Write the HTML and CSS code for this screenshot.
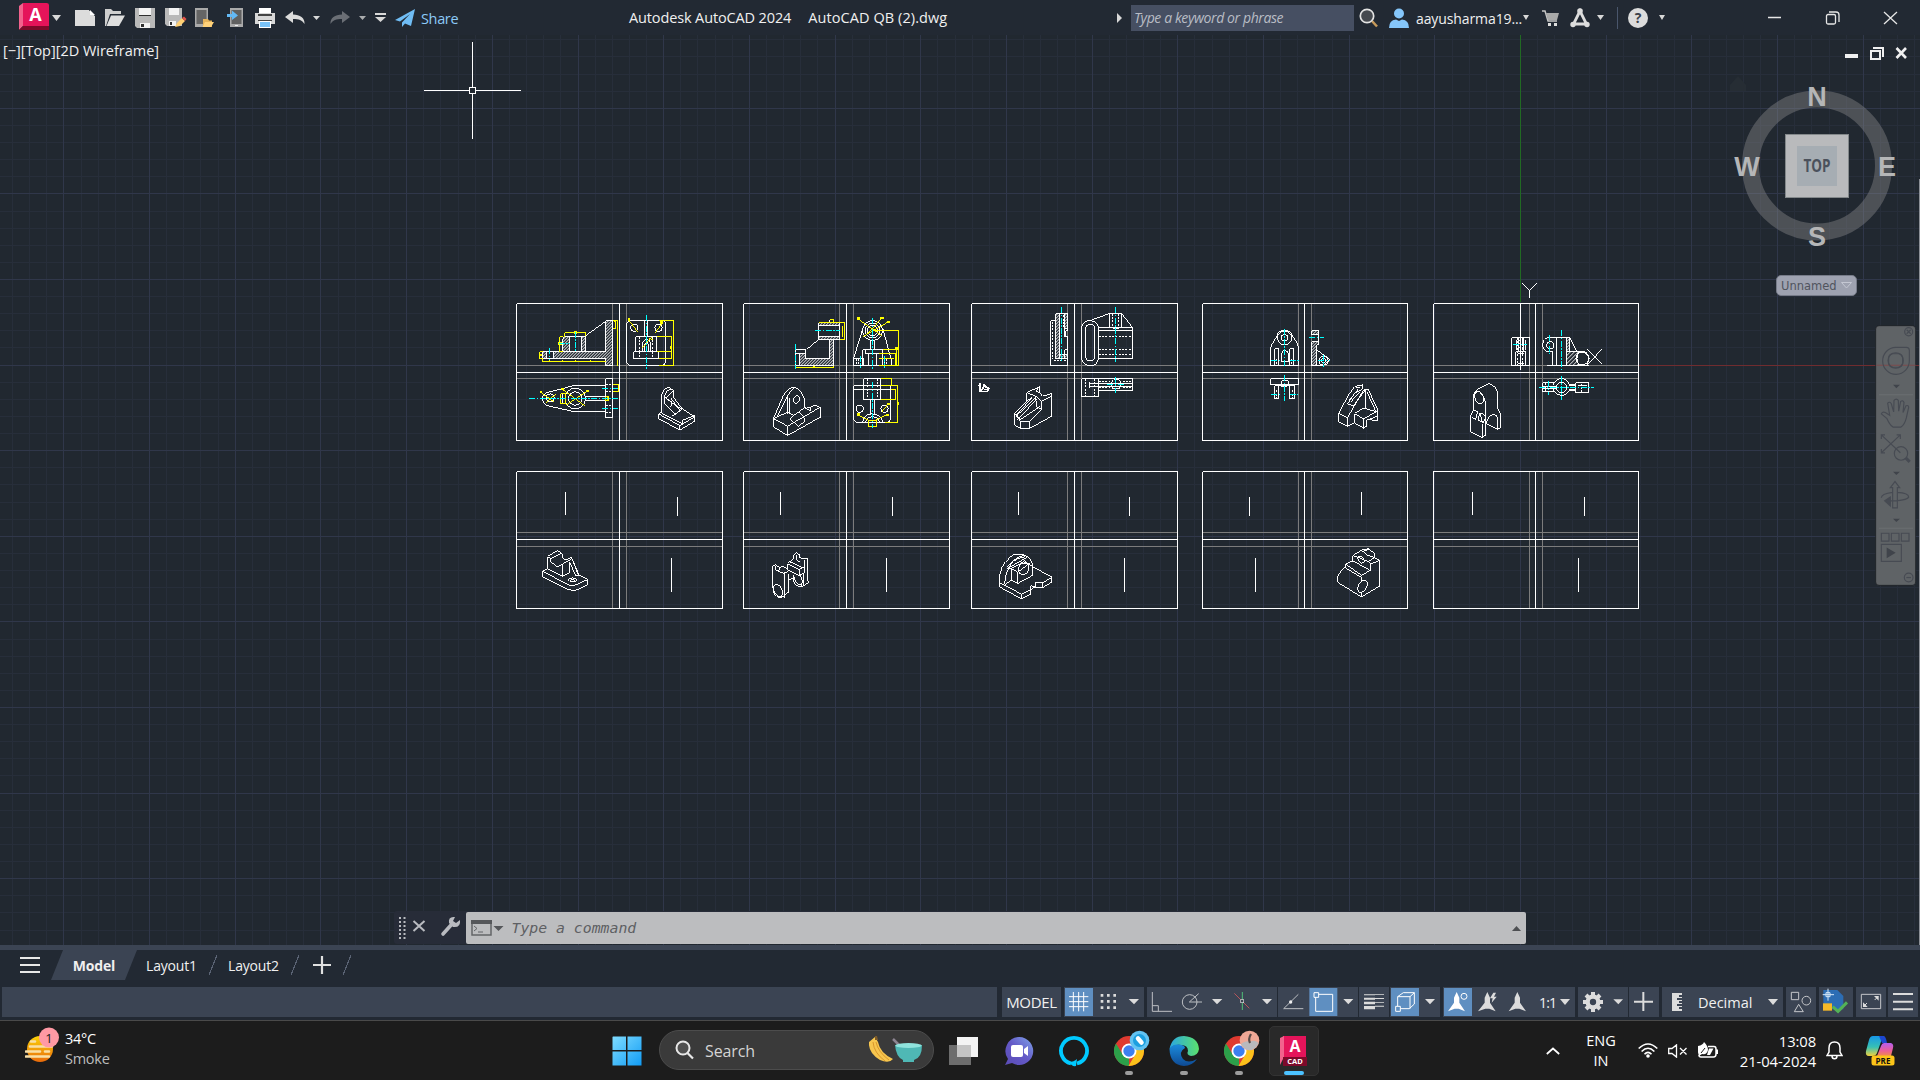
FILE: index.html
```html
<!DOCTYPE html>
<html lang="en">
<head>
<meta charset="utf-8">
<title>Autodesk AutoCAD 2024 - AutoCAD QB (2).dwg</title>
<link rel="stylesheet" href="styles.css">
</head>
<body>
<header class="titlebar">
  <div class="quick">
    <svg class="logo" width="30" height="28" viewBox="0 0 30 28"><path fill="#e5145a" d="M4 0H27.500Q30 0 30 2V23H4z"/><path fill="#f2628d" d="M0 3L4 0V23L0 27z"/><path fill="#7d0a2a" d="M0 27L4 23H30V27H0z"/><text x="16.500" y="17.500" class="logo-a">A</text></svg>
    <svg class="caret c1" width="9" height="6" viewBox="0 0 9 6"><path d="M0 0H9L4.500 6z"/></svg>
    <svg class="ic" width="30" height="24" viewBox="0 0 30 24"><path fill="#dcdcdc" d="M5 4H19L25 10V20H5z"/><path fill="#222933" d="M19 4H25V10z"/><path fill="#fff" d="M20 4L25 9H20z"/></svg>
    <svg class="ic" width="30" height="24" viewBox="0 0 30 24"><path fill="#cfcfcf" d="M5 3H11L13 5H21V8H10L6 20H5z"/><path fill="#dedede" d="M11 9.500H25L19 20H6.500z"/></svg>
    <svg class="ic" width="30" height="24" viewBox="0 0 30 24"><path fill="#b9b9b9" d="M5 2H25V22H7L5 20z"/><path fill="#f3f3f3" d="M9 2H21V9H9zM10 17H20V22H10z"/><path fill="#303030" d="M9 9H21V10H9zM11 18H14V21H11z"/></svg>
    <svg class="ic" width="30" height="24" viewBox="0 0 30 24"><path fill="#b9b9b9" d="M5 2H22V20H7L5 18z"/><path fill="#f3f3f3" d="M9 2H19V9H9zM9 15H16V20H9z"/><path fill="#303030" d="M10 16H12V19H10z"/><path fill="#ffcf73" d="M15 21L17 17L22 12L25 15L20 20z"/><path fill="#e0524a" d="M22 12L24 10.500L26.500 13L25 15z"/></svg>
    <svg class="ic" width="30" height="24" viewBox="0 0 30 24"><path fill="#aaa" d="M5 2H18V21H5z"/><path fill="#656565" d="M6.500 4H16.500V18H6.500z"/><path fill="#e6b45b" d="M13 13H18L19 14.500H22V21H13z"/><path fill="#ffd27a" d="M15 16H24L21 21H12.500z"/></svg>
    <svg class="ic" width="30" height="24" viewBox="0 0 30 24"><path fill="#aaa" d="M10 2H23V21H10z"/><path fill="#606060" d="M11.500 4H21.500V18H11.500z"/><path fill="#63b9f5" d="M7 8H12V4.500L18 9.500L12 14V11H7z"/><path fill="#eee" d="M15 19H18V20H15z"/></svg>
    <svg class="ic" width="30" height="24" viewBox="0 0 30 24"><path fill="#fff" d="M9 2H21V8H9z"/><path fill="#d7d7d7" d="M5 7H25V18H5z"/><path fill="#444" d="M8 8H22V10H8zM8 14H22V15H8z"/><path fill="#fff" d="M9 15H21V22H9z"/><path fill="#78c2f8" d="M10 16H20V21H10z"/></svg>
    <svg class="ic" width="30" height="24" viewBox="0 0 30 24"><path fill="#dcdcdc" d="M5 11L13 5V8.500C20 8.500 25 12 24.500 18C22 14 19 13 13 13V17z"/></svg>
    <svg class="caret c2" width="7" height="4" viewBox="0 0 7 4"><path d="M0 0H7L3.500 4z"/></svg>
    <svg class="ic c3" width="30" height="24" viewBox="0 0 30 24"><path fill="#6a6e75" d="M25 11L17 5V8.500C10 8.500 5 12 5.500 18C8 14 11 13 17 13V17z"/></svg>
    <svg class="caret c4" width="7" height="4" viewBox="0 0 7 4"><path d="M0 0H7L3.500 4z"/></svg>
    <svg class="caret c5" width="11" height="9" viewBox="0 0 11 9"><path d="M0 0H11V2H0zM0 4H11L5.500 9z"/></svg>
    <svg class="plane" width="20" height="18" viewBox="0 0 20 18"><path fill="#70bdf5" d="M20 0L0 11L5 12.500L15 5L7 13.500V18L10 14.500L16 17z"/></svg>
    <span class="share">Share</span>
  </div>
  <div class="doc-title"><span>Autodesk AutoCAD 2024</span><span class="file">AutoCAD QB (2).dwg</span></div>
  <div class="account">
    <svg class="caret" width="5" height="10" viewBox="0 0 5 10"><path d="M0 0L5 5L0 10z"/></svg>
    <div class="search">Type a keyword or phrase</div>
    <svg class="a1" width="20" height="20" viewBox="0 0 20 20"><path stroke="#c79a5b" stroke-width="2.500" d="M13 13L18 18.500"/><circle cx="8" cy="8" r="6.700" fill="#45494f" stroke="#e3e3e3" stroke-width="1.700"/></svg>
    <svg class="a2" width="20" height="20" viewBox="0 0 20 20"><circle cx="10" cy="5.500" r="5" fill="#85c6fa"/><path fill="#85c6fa" d="M0 20Q0 12 7 11.500L10 13L13 11.500Q20 12 20 20z"/></svg>
    <span class="user">aayusharma19...</span>
    <svg class="caret a3" width="6" height="5" viewBox="0 0 6 5"><path d="M0 0H6L3 5z"/></svg>
    <svg class="a4" width="18" height="18" viewBox="0 0 18 18"><path fill="none" stroke="#c6c6c6" stroke-width="1.500" d="M0 2H3L6 12H15"/><path fill="#a9a9a9" d="M4 4H17L15 11H6z"/><path fill="#ddd" d="M6 14H9V17H6zM12 14H15V17H12z"/></svg>
    <svg class="a5" width="20" height="20" viewBox="0 0 20 20"><path fill="none" stroke="#ddd" stroke-width="2.800" d="M10 3L3.500 16H16.500z"/><circle cx="10" cy="3" r="2.800" fill="#ddd"/><circle cx="3" cy="16.500" r="2.700" fill="#ddd"/><circle cx="17" cy="16.500" r="2.700" fill="#ddd"/></svg>
    <svg class="caret a6" width="7" height="5" viewBox="0 0 7 5"><path d="M0 0H7L3.500 5z"/></svg>
    <i class="vsep"></i>
    <span class="help">?</span>
    <svg class="caret a7" width="6" height="5" viewBox="0 0 6 5"><path d="M0 0H6L3 5z"/></svg>
    <svg class="win" width="130" height="14" viewBox="0 0 130 14" fill="none" stroke="#e6e6e6" stroke-width="1.300"><path d="M0 6.500H13M116 1L129 13M129 1L116 13"/><rect x="58.500" y="3.500" width="9" height="9.500" rx="1.500"/><path d="M61 1H68Q71 1 71 4V11"/></svg>
  </div>
</header>

<main class="canvas">
  <svg class="drawing" width="1920" height="910" viewBox="0 35 1920 910">
    <defs>
      <pattern id="hatch" width="9" height="9" patternUnits="userSpaceOnUse"><path d="M0 0H3V3H0zM3 6H6V9H3zM6 3H9V6H6z" fill="#fff"/></pattern>
      <pattern id="hatch2" width="12" height="12" patternUnits="userSpaceOnUse"><path d="M0 12L12 0" stroke="#fff" stroke-width="3"/></pattern>
    </defs>
    <path id="grid-minor" class="minor"/>
    <path id="grid-major" class="major"/>
    <path class="axis-y" d="M1520.500 35V302"/>
    <path class="axis-x" d="M1639 365.500H1920"/>

    <!-- sheets 1 and 2, upper row -->
    <g transform="translate(500.200 290.200) scale(.33333)">
      <g class="g"><path d="M337 40V451M379 40V451M49 226H668M49 265H668M1018 40V451M1060 40V451M730 226H1349M730 265H1349"/></g>
      <g class="w">
        <path d="M49 40H668V451H49zM358 40V451M49 247H668M730 40H1349V451H730zM1039 40V451M730 247H1349"/>
        <path fill="url(#hatch)" d="M316 91H337V226H316V205H127V184H316z"/>
        <path fill="url(#hatch)" d="M187 148L193 139H207V184H187zM244 139H257V184H244z"/>
        <path d="M193 139H257M257 136L316 94"/><path fill="#212830" d="M139 184H160V205H139z"/>
        <path d="M379 103Q379 91 391 91H487Q496 91 496 103V214Q493 226 484 226H391Q379 223 379 214zM433 91V139M442 91V139M406 184V139H469V184M400 184H475V205H400zM427 184V160Q427 148 439 148Q451 148 451 160V184M433 184V163Q439 150 445 163V184"/>
        <circle cx="402" cy="113" r="11"/><circle cx="475" cy="113" r="11"/>
        <path class="d" d="M418 139V184M457 139V184M418 184V205M457 184V205"/>
        <path d="M316 265H337V382H316zM316 286H222L136 308Q126 318 127 325Q127 340 140 346L220 364H316M256 319H316M256 331H316M187 310H196V340H187z"/>
        <circle cx="225" cy="325" r="31"/><circle cx="225" cy="325" r="20"/><circle cx="150" cy="323" r="12"/>
        <path class="d" d="M316 283H337M316 304H337M316 346H337M316 367H337"/>
        <path d="M485 366V312Q490 295 506 292L520 300V321L545 355L583 380V393L539 420L475 385V371L485 366M475 371L539 406L583 380M539 406V420M494 342V315Q498 300 512 296M500 322L520 302M494 320L518 340L545 358L515 378M494 342L526 374M512 324L540 362M485 370L548 402V390L583 376M503 330L515 334L512 350"/>
        <!-- second sheet views -->
        <path fill="url(#hatch)" d="M955 97H1018V106H955zM955 139H1018V148H955z"/><path d="M955 97V148M1018 97V148M955 148L919 178M989 88V97M1000 88V97"/>
        <path fill="url(#hatch)" d="M898 205V190H916V205H989V148H1000V226H898z"/><path d="M886 178H916V190H886zM886 190V226H898"/>
        <circle cx="1117" cy="121" r="30"/><circle cx="1117" cy="121" r="22"/><circle cx="1117" cy="121" r="15"/>
        <path d="M1060 226V205H1090V226zM1060 205L1089 112M1147 112L1172 205M1087 178H1147V226H1087zM1096 190H1138M1096 178V190M1105 190V226M1129 190V226M1112 148V178M1123 148V178M1147 205H1175V226H1060"/>
        <path class="d" d="M1069 205V226M1075 205V226M1153 205V226M1160 205V226"/>
        <path d="M1090 265H1141V328H1090zM1060 286H1172V385Q1170 397 1158 397H1076Q1060 397 1060 382zM1060 298H1172M1112 328V370M1123 328V370M1087 397Q1090 371 1117 371Q1145 373 1147 397M1096 397Q1098 380 1117 380Q1136 380 1138 397"/>
        <path class="d" d="M1102 265V328M1132 265V328"/><circle cx="1079" cy="356" r="11"/><circle cx="1153" cy="356" r="11"/>
        <path d="M820 385L862 408L962 350V380L862 436L820 410zM862 408V436M820 385L850 315Q865 290 882 292Q900 295 908 315L914 330V350M832 378L862 318V370M862 318Q870 300 882 292M868 370V322M820 385L862 366L880 376L914 352L930 362M880 376L868 386L895 408L912 395Q915 375 895 366M930 352Q945 340 958 352L962 360M914 355L930 350V362"/><ellipse cx="889" cy="328" rx="9" ry="12" transform="rotate(25 889 328)"/>
      </g>
      <g class="y">
        <path d="M193 139V127H257V136M187 139H178V184H187M118 184H127M118 184V205H127V214H316M148 208V216M187 208V216M226 208V216M270 208V216M337 91H352V226M337 115H346V94H340M475 91H520V226H475M469 139H514V205H475M469 184H514M382 85L412 124M487 97L466 127M427 172L456 139M445 142L457 148M337 283H355V304H337M118 304L160 334M168 311L136 338M186 297L253 346M265 300L196 346M181 310H196V340H181zM316 319H325V331H316z"/>
        <path d="M955 97H1033V148H1018M1027 106V139M989 88H1000V97M886 226V232H1000V226M1072 85L1144 136M1147 82L1096 137M1166 94L1087 140M1120 121H1195V226H1135M1147 178H1190V226M1135 190H1186V226M1135 205H1180M1141 265H1174V286H1141M1172 298H1186V328H1141M1172 286H1192V397H1153M1165 340L1144 366M1072 373L1110 392M1160 373L1123 392M1105 391V409H1130V391z"/>
        <path class="yt" d="M118 194H124M174 160H186M220 127H230M349 155H354M517 160H522M510 172H516M938 230H944M1184 175H1194M1189 340H1195M1070 85H1078M1140 84H1151M1160 95H1168M1070 373H1078M1158 374H1166M1160 342H1168M258 302H266M183 297H191M118 305H126M382 88H390M480 97H488M320 325H326"/>
      </g>
      <g class="c"><path d="M148 174V210M226 124V184M175 160H210M439 75V235M87 325H355M306 295H352M306 355H352M945 121H1018M886 162V236M1117 84V236M1081 196V234M1153 196V234M1117 276V414"/></g>
    </g>

    <!-- sheets 3 and 4, upper row -->
    <g transform="translate(960.200 290.200) scale(.33333)">
      <g class="g"><path d="M322 40V451M364 40V451M34 226H653M34 265H653M1015 40V451M1054 40V451M727 226H1343M727 265H1343"/></g>
      <g class="w">
        <path d="M34 40H653V451H34zM343 40V451M34 247H653M727 40H1343V451H727zM1033 40V451M727 247H1343"/>
        <path d="M286 70H322V121H316V139M322 140V206M286 91H271V226H322V206M313 115V139H322M313 206V178H322"/>
        <path fill="url(#hatch)" d="M286 70H298V206H286zM313 70H322V115H313zM298 193H322V206H298z"/>
        <path class="d" d="M277 94V206M280 211H322M298 100V200M310 75V112"/>
        <path d="M364 112Q368 91 390 91Q412 93 415 112V205Q412 226 390 226Q368 226 364 205zM376 115Q378 102 390 102Q402 102 404 115V200Q402 212 390 212Q378 212 376 200zM390 91L448 70H484L517 112V205H415M415 112H517M415 121H517M448 70V112M484 70V112M457 115H475"/>
        <path class="d" d="M415 139H517M415 178H517M415 193H517M457 70V112M475 70V112"/>
        <path d="M364 265H415V319H364zM415 265H517V301H415M388 280H517M388 289H517M388 274V292M451 280L460 268H475L484 280L478 295H457z"/>
        <path class="d" d="M376 265V319M404 265V319M415 274H448M487 274H517M415 292H448M487 292H517"/>
        <path class="thick" d="M60 278V304H82L86 294L76 290L70 282M55 288L62 282M60 304L68 296L72 286M70 298H80"/>
        <path d="M163 370V404L181 415H208V394H181L163 370L199 333V307L238 290V307L247 318L274 310V378L208 415M199 307L226 318L244 333L274 318M226 318V322L172 374M244 333V358L208 394M181 394V415M172 388L232 325M181 388L238 350M199 333L216 322M216 322L166 378M232 292L229 304L238 307M166 370L181 390M226 322L230 350L244 358"/>
        <path d="M931 226V175Q932 165 951 137Q953 121 973 121Q994 121 996 137Q1015 160 1015 175V226zM943 226V175H955V226M988 226V175H1000V226M964 214V190Q966 181 973 181Q982 181 984 190V214z"/>
        <circle cx="973" cy="143" r="21"/><circle cx="973" cy="143" r="10"/><path class="d" d="M949 205V226M994 205V226"/>
        <path fill="url(#hatch)" d="M1054 121H1075V133H1054zM1054 154H1075V163H1069V226H1054z"/><path d="M1075 133V154M1069 178L1108 208L1090 226H1069"/><circle cx="1090" cy="211" r="14"/><circle cx="1090" cy="211" r="7"/>
        <path d="M931 265H1015V283H931zM943 286H955V325H943zM988 286H1003V325H988zM955 286Q973 292 988 286M964 271H984V286H964z"/>
        <path class="d" d="M949 300V325M996 300V325"/>
        <path d="M1135 370V394L1162 408L1183 398V370L1210 354L1252 365V392L1228 388M1135 370L1162 382V408M1135 370L1165 315L1183 289L1207 284V296L1183 310L1162 342L1180 346L1216 298M1162 382L1198 320L1210 300Q1225 290 1228 306L1252 358V392M1216 298V354M1220 304L1246 362M1183 370L1210 386V414L1183 398M1210 386L1246 366M1210 414L1219 408V390L1252 378M1165 333L1195 296M1171 336L1198 306M1183 289L1198 293"/>
      </g>
      <g class="c"><path d="M304 51V212M466 51V216M441 283H490M466 261V309M973 115V230M933 211H958M988 211H1015M1047 142H1090M1074 211H1110M1090 194V230M973 255V333M933 313H958M988 313H1012"/></g>
    </g>

    <!-- sheet 5, upper row -->
    <g transform="translate(1400.200 270.200) scale(.33333)">
      <g class="g"><path d="M388 100V511M427 100V511M100 286H716M100 325H716"/></g>
      <g class="w">
        <path d="M100 100H716V511H100zM406 100V511M100 307H716M361 97V300"/>
        <path d="M334 202H388V286H334zM346 244H376V286H346zM346 244V286M355 202V244M369 202V244M349 208V240M376 208V240M352 250H370M352 280H370"/>
        <path class="d" d="M352 202V286M366 202V286M355 210H370M355 220H370M355 232H370"/>
        <path d="M457 286V244H440Q427 238 427 222Q430 204 445 202H508V244M469 202V286M499 202V286M508 202L530 244M440 286H565M499 244H548Q566 246 567 265L560 286"/><circle cx="450" cy="225" r="11"/>
        <path fill="url(#hatch)" d="M499 202H508V244H499z"/><path fill="url(#hatch2)" d="M499 244H535Q524 265 538 286H499z"/><circle cx="546" cy="265" r="19"/>
        <path d="M562 237L606 282M606 237L562 282M366 39L388 61L410 39M388 61V84"/>
        <path d="M427 337H463Q468 325 484 325Q502 326 506 342H526V337H566V367H526V361H506Q500 376 484 376Q468 375 463 364H427zM427 349H466M427 355H466M506 346H526V358H506M532 346H560"/><circle cx="484" cy="352" r="16"/>
        <path class="d" d="M436 337V364M460 337V364M545 340V367"/>
        <path d="M211 485V436L220 418V370L236 355L267 340L284 350L292 364V415L301 430V472L292 478L259 460Q262 436 280 433Q292 434 292 445V478M211 485L247 502L256 495V436M247 502V460M256 436L257 400L250 380L236 362L220 370M220 418L232 424L226 448L214 440M235 428L250 432L256 440M238 430L234 450L250 458L254 446M240 432L246 456"/><ellipse cx="237" cy="382" rx="13" ry="19" transform="rotate(-20 237 382)"/>
      </g>
      <g class="c"><path d="M339 223H381M448 195V252M484 180V300M417 352H582M484 316V388M445 333V375"/></g>
    </g>

    <!-- lower row -->
    <g transform="translate(500.200 460.200) scale(.33333)">
      <g class="g"><path d="M337 34V445M379 34V445M49 217H668M49 259H668M1018 34V445M1060 34V445M730 217H1349M730 259H1349"/></g>
      <g class="w">
        <path d="M49 34H668V445H49zM358 34V445M49 238H668M730 34H1349V445H730zM1039 34V445M730 238H1349M196 96V165M532 111V168M514 294V396M841 96V165M1177 111V168M1159 294V396"/>
        <path d="M127 333V350L205 388Q220 394 232 388L262 374V358L236 344M127 333L142 325V289L172 271L186 280V290L193 300L214 292L236 344L226 348M127 333L205 374Q220 380 232 372L262 358M142 289L152 295L181 280M152 295V305L172 320L214 296M142 325L187 348V312M187 348L208 338V304M208 304L226 346M217 300L234 343"/><ellipse cx="217" cy="359" rx="12" ry="6"/><path d="M212 359H222V363H212z"/>
        <path d="M817 380V318L826 314L838 322L850 318L862 328V310L880 296V285L889 278L898 284V292L910 296L922 296V360L926 366L905 380Q885 380 880 362V350M817 380Q822 405 844 412L865 396V360L880 352M853 412V336M862 328L898 346L912 338V300M862 310L898 328L912 320M826 318V330L853 340L862 335M838 322L835 334M868 304L905 322M889 285V300L898 304M865 340V360M898 346V330"/><ellipse cx="833" cy="392" rx="13" ry="20" transform="rotate(-20 833 392)"/><path d="M880 345Q885 375 905 375Q910 360 900 345M910 340V375"/>
      </g>
    </g>
    <g transform="translate(960.200 460.200) scale(.33333)">
      <g class="g"><path d="M322 34V445M364 34V445M34 217H653M34 259H653M1015 34V445M1054 34V445M727 217H1343M727 259H1343"/></g>
      <g class="w">
        <path d="M34 34H653V445H34zM343 34V445M34 238H653M727 34H1343V445H727zM1033 34V445M727 238H1343M175 96V165M508 111V168M493 294V396M868 111V168M1204 96V165M886 294V396"/>
        <path d="M118 367V380L184 416L211 402V388L226 380V366L247 368L274 352V366L247 383H232L211 376V388M118 367L184 402L211 388M184 402V416M118 367V345Q130 295 160 284Q195 278 210 296L218 315V345L172 370L154 360V325L140 325L172 308L202 290M133 374L154 360M133 370Q135 340 150 315Q170 290 195 290M142 320Q160 295 190 285M154 325L172 336V370M172 336L208 310M190 300L218 320L274 350M154 325L190 305L205 310M247 368V383"/><ellipse cx="190" cy="326" rx="15" ry="18" transform="rotate(25 190 326)"/>
        <path d="M1132 362V350Q1140 330 1156 320V312L1178 302V286L1204 270L1225 265L1243 280V292L1258 300V378L1204 410L1138 370zM1156 312L1204 345L1232 330V312L1258 300M1178 302L1232 332M1154 322L1204 352V364M1204 395V408M1178 286L1195 292M1204 270L1222 285L1243 292L1225 304M1195 290L1212 300L1225 304L1232 312M1210 272L1225 268"/><ellipse cx="1207" cy="378" rx="12" ry="20" transform="rotate(28 1207 378)"/><ellipse cx="1203" cy="298" rx="8" ry="12" transform="rotate(-35 1203 298)"/>
      </g>
    </g>
    <g class="g g1"><path d="M1529.500 471V608M1542.500 471V608M1433 532.500H1638M1433 546.500H1638"/></g>
    <g class="w w1"><path d="M1433.500 471.500H1638.500V608.500H1433.500zM1535.500 471V608M1433 539.500H1638M1472.500 492V515M1584.500 497V516M1578.500 558V592"/>
      <path d="M424 90.500H521M472.500 42V139"/><rect x="469.500" y="87.500" width="6" height="6" class="pick"/></g>
  </svg>

  <div class="view-label">[−][Top][2D Wireframe]</div>

  <svg class="mdi" width="64" height="15" viewBox="0 0 64 15"><path fill="#f0f0f0" d="M0 8H13V12H0z"/><path fill="none" stroke="#f0f0f0" stroke-width="2" d="M26 5H35V13H26zM28 2H38V11"/><path stroke="#f0f0f0" stroke-width="2.600" d="M51.500 2L61 12M61 2L51.500 12"/></svg>

  <svg class="viewcube" width="170" height="180" viewBox="1732 76 170 180">
    <path fill="#262d34" d="M1730 85L1738 76L1746 85V91H1730z"/>
    <circle cx="1817" cy="165.500" r="66.500" fill="none" stroke="#8b8b8d" stroke-opacity=".42" stroke-width="17"/>
    <rect x="1785.500" y="134.500" width="63" height="63" fill="#b9babc" stroke="#83888a"/>
    <rect x="1797" y="146" width="40" height="40" fill="#a6adb3"/>
    <text class="top" x="1817" y="172" textLength="27" lengthAdjust="spacingAndGlyphs">TOP</text>
    <g class="dir"><text x="1817" y="106">N</text><text x="1817" y="246">S</text><text x="1747" y="176">W</text><text x="1887" y="176">E</text></g>
  </svg>

  <div class="ucs"><span>Unnamed</span><svg width="11" height="7" viewBox="0 0 11 7"><path d="M.5.500H10.500L5.500 6z" fill="none" stroke="#c4c7d2"/></svg></div>

  <svg class="navbar" width="41" height="261" viewBox="526 755 123 772" preserveAspectRatio="none">
    <rect x="528" y="757" width="120" height="768" rx="10" fill="#5f6366" stroke="#16191e" stroke-width="2"/>
    <path d="M530 874H648" stroke="#7b4a4c" stroke-width="3"/>
    <g fill="none" stroke="#474b53" stroke-width="3.500">
      <circle cx="627" cy="775" r="12"/><path d="M621 769L633 781M633 769L621 781"/>
      <path d="M588 821H620Q629 821 629 830V860A40 40 0 1 1 588 821z"/><circle cx="588" cy="860" r="23"/><rect x="567" y="840" width="42" height="40" rx="13"/>
      <path d="M580 1057Q570 1050 562 1032L545 1018Q548 1010 557 1014L570 1022L564 986Q570 980 575 988L582 1012L583 978Q590 970 596 978L597 1010L603 981Q610 976 613 984L610 1014L619 994Q627 991 627 999L620 1030Q615 1050 604 1057z"/>
      <path d="M545 1080L602 1133M602 1080L545 1133M545 1092V1080H556M591 1080H602V1092M545 1122V1133H556"/><circle cx="604" cy="1135" r="20"/><path stroke-width="9" d="M618 1148L630 1160"/>
      <path d="M579 1296V1236H572L586 1218L600 1236H593V1296zM593 1250Q627 1252 627 1264Q620 1276 560 1275M579 1250Q545 1254 545 1266"/><path fill="#474b53" d="M572 1264L555 1275L572 1290z"/>
      <path d="M545 1371H568V1394H545zM575 1371H598V1394H575zM605 1371H628V1394H605zM545 1404H605V1454H545z"/><circle cx="627" cy="1502" r="13"/><path d="M620 1502H634"/>
    </g>
    <path fill="#40444b" d="M580 932H601L590 942zM580 1189H601L590 1199zM580 1328H601L590 1338zM561 1413L588 1429L561 1445z"/>
    <path stroke="#6b6f72" stroke-width="3" d="M538 961H640M538 1356H640"/>
  </svg>

  <i class="edge"></i>

  <div class="command">
    <svg class="cmd-tools" width="72" height="32" viewBox="0 0 72 32"><g stroke="#b9bbc0" stroke-width="2" stroke-dasharray="2 2"><path d="M6 6V28M10.500 6V28"/></g><path stroke="#b9bbc0" stroke-width="2" d="M19.500 10L30.500 20M30.500 10L19.500 20"/><path stroke="#b9bbc0" stroke-width="3.600" stroke-linecap="round" d="M49 23L58 13"/><path fill="#b9bbc0" d="M55 12Q54 5 61 6L59 10L62 12L66 9Q67 17 59 16z"/></svg>
    <div class="cmd-input">
      <svg width="34" height="18" viewBox="0 0 34 18"><path fill="none" stroke="#636568" stroke-width="1.500" d="M1 2H20V16H1z"/><path fill="#55575a" d="M0 1H21V5H0zM22.500 7H32.500L27.500 12z"/><path fill="none" stroke="#636568" d="M3 7L6 9.500L3 12M7 13H12"/></svg>
      <span>Type a command</span>
      <svg class="up" width="9" height="5" viewBox="0 0 9 5"><path fill="#4d4f52" d="M4.500 0L9 5H0z"/></svg>
    </div>
  </div>
</main>

<nav class="tabs">
  <svg class="burger" width="20" height="17" viewBox="0 0 20 17"><path stroke="#e8e8e8" stroke-width="2.200" d="M0 2H20M0 9H20M0 16H20"/></svg>
  <div class="tab active">Model</div>
  <div class="tab t1">Layout1</div><i class="slash"></i>
  <div class="tab t2">Layout2</div><i class="slash"></i>
  <svg class="plus" width="18" height="18" viewBox="0 0 18 18"><path stroke="#e0e0e0" stroke-width="2.200" d="M0 9H18M9 0V18"/></svg><i class="slash"></i>
</nav>

<div class="status">
  <div class="cell fill"></div>
  <div class="cell s-model">MODEL</div>
  <svg class="cell s-grid" width="80" height="30" viewBox="252 261 240 90"><path class="on" d="M255 264H339V348H255z"/><g stroke="#fff" stroke-width="3"><path d="M267 290H325M267 305H325M267 320H325M280 276V334M296 276V334M311 276V334"/></g><g fill="#dcdcdc"><path d="M362 282h8v8h-8zM381 282h8v8h-8zM400 282h8v8h-8zM362 300h8v8h-8zM381 300h8v8h-8zM400 300h8v8h-8zM362 319h8v8h-8zM381 319h8v8h-8zM400 319h8v8h-8z"/><path d="M446 297H477L462 313z"/></g></svg>
  <svg class="cell s-ortho" width="130" height="30" viewBox="501 261 390 90"><g fill="none" stroke="#bcbfc3" stroke-width="3"><path d="M517 276V334H576M517 317H535V334M628 306H666M628 306L656 281"/><circle cx="629" cy="306" r="22"/></g><path stroke="#4fbf78" stroke-width="3" d="M787 276V330"/><path stroke="#b5555c" stroke-width="3" d="M763 280L808 325"/><rect x="782" y="299" width="9" height="9" fill="#3b4453" stroke="#ddd" stroke-width="2"/><path fill="#dcdcdc" d="M696 297H727L711 313zM846 297H876L861 313z"/></svg>
  <svg class="cell s-osnap" width="80" height="30" viewBox="893 261 240 90"><path class="on" d="M987 264H1071V348H987z"/><g fill="none" stroke="#bcbfc3" stroke-width="3"><path d="M910 326H969M910 326L954 283"/></g><circle cx="931" cy="306" r="5" fill="#eee"/><path fill="none" stroke="#fff" stroke-width="3" d="M1001 278H1015V292H1001zM1015 283H1057V334H1006V292"/><path fill="#dcdcdc" d="M1089 297H1119L1104 313z"/></svg>
  <svg class="cell s-lw" width="30" height="30" viewBox="1137 261 90 90"><path fill="#dcdcdc" d="M1152 283h33v3h-33zM1152 293h33v6h-33zM1152 305h33v8h-33zM1152 318h33v10h-33zM1185 283h27v2h-27zM1185 294h27v3h-27zM1185 306h27v2h-27zM1185 317h27v3h-27z"/></svg>
  <svg class="cell s-3d" width="50" height="30" viewBox="1230 261 150 90"><path class="on" d="M1233 264H1317V348H1233z"/><path fill="none" stroke="#fff" stroke-width="3" d="M1253 318V290L1270 278H1303V312L1288 326H1262M1253 290H1290V326M1290 290L1303 278M1247 319H1261V334H1247z"/><path fill="#dcdcdc" d="M1335 297H1365L1350 313z"/></svg>
  <div class="cell s-scale">
    <svg width="94" height="30" viewBox="9 51 282 90"><path class="on" d="M12 54H96V138H12z"/><path fill="#fff" d="M50 66L58 83V98L75 124L56 116H44L24 124L42 98V83z"/><circle cx="72" cy="79" r="9" fill="none" stroke="#fff" stroke-width="3"/><g fill="#dcdcdc"><path d="M142 66L150 83V98L167 124L148 116H136L114 124L134 98V83zM160 68L150 85H158L155 98L170 80H162L168 68zM232 66L240 83V98L258 124L238 116H226L206 124L224 98V83z"/></g></svg>
    <span>1:1</span>
    <svg width="10" height="6" viewBox="0 0 10 6"><path fill="#dcdcdc" d="M0 0H10L5 6z"/></svg>
  </div>
  <svg class="cell s-gear" width="50" height="30" viewBox="414 51 150 90"><circle cx="459" cy="96" r="16" fill="none" stroke="#dcdcdc" stroke-width="13"/><g stroke="#dcdcdc" stroke-width="12"><path d="M459 66V78M459 114V126M429 96H441M477 96H489M438 75L447 84M471 108L480 117M480 75L471 84M447 108L438 117"/></g><path fill="#dcdcdc" d="M520 88H549L535 103z"/></svg>
  <svg class="cell s-add" width="30" height="30" viewBox="567 51 90 90"><path stroke="#dcdcdc" stroke-width="6" d="M582 95H639M610 66V123"/></svg>
  <div class="cell s-units">
    <svg width="11" height="20" viewBox="0 0 11 20"><path fill="#dcdcdc" d="M0 1H10V3H7V5H10V6H5V8H10V9H7V11H10V12H5V14H10V15H7V17H10V19H0z"/></svg>
    <span>Decimal</span>
    <svg width="10" height="6" viewBox="0 0 10 6"><path fill="#dcdcdc" d="M0 0H10L5 6z"/></svg>
  </div>
  <svg class="cell s-iso" width="30" height="30" viewBox="1038 51 90 90" fill="none" stroke="#c5c7ca" stroke-width="3"><path d="M1054 67H1076V89H1054zM1063 125L1076 103L1090 125z"/><circle cx="1099" cy="92" r="13"/></svg>
  <svg class="cell s-hw" width="34" height="30" viewBox="1137 51 102 90"><path fill="#2c6db4" d="M1150 60H1192L1210 78V118H1150z"/><path fill="#f6b928" d="M1149 100H1176V122H1149z"/><path stroke="#d5e8f8" stroke-width="3" d="M1164 56V92M1148 74H1182M1158 68h12v12h-12z" fill="none"/><path fill="none" stroke="#53b257" stroke-width="9" d="M1178 110L1194 124L1221 97"/></svg>
  <svg class="cell s-clean" width="30" height="30" viewBox="1248 51 90 90"><path fill="none" stroke="#c5c7ca" stroke-width="3" d="M1264 73H1322V116H1264z"/><path fill="#ddd" d="M1316 78V92L1302 78zM1269 111V97L1283 111z"/><path stroke="#ddd" stroke-width="3" d="M1304 90L1314 80M1271 109L1281 99"/></svg>
  <svg class="cell s-menu" width="30" height="30" viewBox="1344 51 90 90"><path stroke="#dcdcdc" stroke-width="6" d="M1359 72H1419M1359 95H1419M1359 118H1419"/></svg>
</div>

<footer class="taskbar">
  <div class="weather">
    <svg width="40" height="40" viewBox="25 1026 40 40"><defs><linearGradient id="sun" x2="0" y2="1"><stop stop-color="#fcd308"/><stop offset="1" stop-color="#e86a0b"/></linearGradient></defs><ellipse cx="40" cy="1049" rx="13" ry="13" fill="url(#sun)"/><g stroke="#f9dfa6" stroke-width="2.600" stroke-linecap="round"><path d="M31 1041.500H35M30 1046.500H52M26 1051.500H40M45 1051.500H49M26 1056.500H49"/></g><circle cx="49" cy="1037.500" r="10" fill="#ff99a4"/><text x="49" y="1042.500" class="badge-n">1</text></svg>
    <div class="wtext"><b>34°C</b><span>Smoke</span></div>
  </div>
  <svg class="start" width="30" height="30" viewBox="0 0 30 30"><defs><linearGradient id="win" x1="0" y1="0" x2="1" y2="1" gradientUnits="objectBoundingBox"><stop stop-color="#7fdcff"/><stop offset="1" stop-color="#119cf5"/></linearGradient></defs><path fill="url(#win)" d="M1 .5H14V14H.5V1zM15.500.5H29.500V14H15.500zM.5 15.500H14V29.500H.5zM15.500 15.500H29.500V29.500H15.500z"/></svg>
  <div class="tsearch">
    <svg width="20" height="20" viewBox="0 0 20 20"><circle cx="8" cy="8" r="6.500" fill="#505050" stroke="#e8e8e8" stroke-width="2"/><path stroke="#e8e8e8" stroke-width="2.200" d="M12.500 13L18 18.500"/></svg>
    <span>Search</span>
    <svg class="fruit" width="54" height="28" viewBox="869 1037 54 28"><path fill="#f7c64e" d="M875 1038L878 1043Q880 1054 893 1060Q889 1065 880 1061Q868 1054 869 1043z"/><path fill="none" stroke="#d9962c" d="M873 1043Q874 1054 885 1062M876 1043Q878 1053 889 1061"/><path fill="#7b5a2a" d="M875 1037H877L878 1041H875z"/><path stroke="#8d8592" stroke-width="2.500" d="M893 1040L902 1049"/><path fill="#4fb8b5" d="M895 1046H922Q922 1059 914 1061V1063H903V1061Q896 1058 895 1046z"/><ellipse cx="908.500" cy="1046.500" rx="13" ry="2.500" fill="#8fe3dc"/></svg>
  </div>
  <div class="apps">
    <div class="app"><svg width="30" height="30" viewBox="0 0 30 30"><path fill="#fff" opacity=".95" d="M8 1H29V21H8z"/><path fill="#777" opacity=".9" d="M0 9H22V29H0z"/><path fill="#c4c4c4" d="M8 9H22V21H8z"/></svg></div>
    <div class="app"><svg width="30" height="30" viewBox="0 0 30 30"><defs><linearGradient id="tm" x1="1" x2="0" y2="1"><stop stop-color="#7fa4ea"/><stop offset=".5" stop-color="#6459c7"/><stop offset="1" stop-color="#5a4bb5"/></linearGradient></defs><path fill="url(#tm)" d="M15 1A14 14 0 1 1 8 27L1 29L4 23A14 14 0 0 1 15 1z"/><rect x="7" y="9" width="12" height="12" rx="2" fill="#fff"/><path fill="#fff" d="M20 13L24 10V20L20 17z"/></svg></div>
    <div class="app"><svg width="32" height="32" viewBox="0 0 32 32"><path fill="none" stroke="#00caff" stroke-width="3.800" d="M13 28.500A13 13 0 1 1 19 28.500"/><path fill="#00caff" d="M11 27Q16 27 19 24L18 31Q14 32 11 27z"/></svg></div>
    <div class="app run"><svg width="40" height="42" viewBox="0 0 40 42"><use href="#chrome"/><circle cx="25.500" cy="10.500" r="9.800" fill="#62c3f2"/><circle cx="25.500" cy="10.500" r="6.500" fill="#1b9fe0"/><path stroke="#fff" stroke-width="4.500" stroke-linecap="round" d="M24 8.500L27.500 12.500"/></svg></div>
    <div class="app run"><svg width="30" height="30" viewBox="0 0 30 30"><defs><linearGradient id="eg"><stop stop-color="#2ba7e2"/><stop offset="1" stop-color="#5be06c"/></linearGradient><linearGradient id="eb" x2="0" y2="1"><stop stop-color="#1b8bdc"/><stop offset="1" stop-color="#0e4a93"/></linearGradient></defs><path fill="url(#eg)" d="M.5 13Q3 0 15 0Q29 1 30 13Q29 20 22 20Q17 19 19 15Q19 9 12 9Q5 8 .5 13z"/><path fill="url(#eb)" d="M.5 13Q3 8 10 8.500Q16 9 16 12Q9 16 14 23Q19 28 28 23Q23 30 15 30Q1 29 .5 13z"/></svg></div>
    <div class="app run"><svg width="40" height="42" viewBox="0 0 40 42"><g id="chrome"><circle cx="15" cy="21" r="15" fill="#df3a30"/><path fill="#2ca04a" d="M2 13.500L9 25L15 21V36A15 15 0 0 1 2 13.500z"/><path fill="#fcc21b" d="M15 14H28.300A15 15 0 0 1 14.500 36L21.500 24z"/><circle cx="15" cy="21" r="7.500" fill="#fff"/><circle cx="15" cy="21" r="5.700" fill="#3c7ff0"/></g><circle cx="25.500" cy="10.500" r="9.800" fill="#efa896"/><path fill="#b9b9bd" d="M17 14Q22 10 26 12Q30 9 34.500 13Q31.500 20 25.500 20.300Q20 20 17 14z"/><path stroke="#584b48" stroke-width="2.200" d="M27 4Q24 9 26 13" fill="none"/></svg></div>
    <div class="app cad"><svg width="28" height="30" viewBox="0 0 28 30"><path fill="#e5145a" d="M3 0H26V21H3z"/><path fill="#f2628d" d="M0 2L4 0V21L0 29z"/><path fill="#7d0a2a" d="M3 21H27V30H3z"/><text x="15" y="16" class="cad-a">A</text><text x="15" y="28" class="cad-c">CAD</text></svg></div>
  </div>
  <div class="tray">
    <svg class="r1" width="14" height="8" viewBox="0 0 14 8"><path fill="none" stroke="#fff" stroke-width="1.700" d="M.8 7L7 1.500L13.200 7"/></svg>
    <div class="lang">ENG<br>IN</div>
    <svg class="r2" width="20" height="15" viewBox="0 0 20 15"><g fill="none" stroke="#fff" stroke-width="1.600"><path d="M.7 5.500Q10-3.500 19.300 5.500M3.600 8.500Q10 2 16.400 8.500M6.500 11.300Q10 7.500 13.500 11.300"/></g><circle cx="10" cy="13" r="1.800" fill="#fff"/></svg>
    <svg class="r3" width="20" height="14" viewBox="0 0 20 14" fill="none" stroke="#fff" stroke-width="1.300"><path d="M.7 4.500H4L8.500.9V13.100L4 9.500H.7zM12 4L18.500 10.500M18.500 4L12 10.500"/></svg>
    <svg class="r4" width="21" height="18" viewBox="0 0 21 18"><path fill="none" stroke="#fff" stroke-width="1.500" d="M10 4.500H16Q18 4.500 18 7V12Q18 15 15.500 15H3Q1 15 1 13"/><path fill="#fff" d="M18 7.500H20V12H18zM0 4Q5 3 6 0Q10 4 10 8Q9 13 4 12L1 14Q-1 8 0 4zM11 6.500H15.500L12 13H9z"/><path stroke="#1c1c1c" d="M3 11L7 6"/></svg>
    <div class="clock">13:08<br>21-04-2024</div>
    <svg class="r5" width="17" height="19" viewBox="0 0 17 19" fill="none" stroke="#fff" stroke-width="1.500"><path d="M1 14.500L3 11V7Q3 1 8.500 1Q14 1 14 7V11L16 14.500zM6 15Q6 17.800 8.500 17.800Q11 17.800 11 15"/></svg>
    <svg class="r6" width="30" height="30" viewBox="0 0 30 30"><defs><linearGradient id="ca" x2="0" y2="1"><stop stop-color="#1798e8"/><stop offset=".55" stop-color="#36c0b5"/><stop offset="1" stop-color="#f2d13d"/></linearGradient><linearGradient id="cb" x2="0" y2="1"><stop stop-color="#b35ef0"/><stop offset=".6" stop-color="#ed5f96"/><stop offset="1" stop-color="#f08c4a"/></linearGradient></defs><path fill="url(#ca)" d="M8 0H18L12 17Q11 20 7 20H4Q0 20 1 15L4 4Q5 0 8 0z"/><path fill="#1c47cf" d="M14 0H19Q21 1 22 7H17z"/><path fill="url(#cb)" d="M19 7H26Q29 8 28 12L26 20H12L16 10Q17 7 19 7z"/><rect x="6.500" y="19.500" width="23" height="10" rx="2.500" fill="#fcc419"/><text x="18" y="27.500" class="pre">PRE</text></svg>
  </div>
</footer>
<script src="grid.js"></script>
</body>
</html>
```
FILE: styles.css
```css
* { box-sizing: border-box; }
body {
  margin: 0;
  width: 1920px;
  height: 1080px;
  overflow: hidden;
  display: flex;
  flex-direction: column;
  background: #222933;
  color: #f0f0f0;
  font-family: "Open Sans", "Noto Sans", sans-serif;
  font-size: 14.500px;
}
svg { display: block; flex: none; }
span, div { white-space: nowrap; }

/* title bar */
.titlebar { height: 35px; flex: none; display: grid; grid-template-columns: 629px 488px 1fr; align-items: center; }
.quick, .account { display: flex; align-items: center; height: 35px; }
.quick { padding-left: 19px; }
.logo { margin-top: -2px; }
.logo-a, .cad-a { font: bold 18px "Open Sans", sans-serif; fill: #fff; text-anchor: middle; }
.caret { fill: #d8d8d8; }
.c1 { margin: 0 9px 0 3px; }
.c2 { margin: 0 5px 0 3px; }
.c4 { margin: 0 9px 0 4px; opacity: .75; }
.c5 { margin-right: 9px; }
.share { color: #8ccaf8; font-size: 14.500px; letter-spacing: -.35px; margin: 1px 0 0 6px; }
.doc-title { font-size: 14.500px; letter-spacing: -.13px; margin-top: -1px; }
.doc-title .file { letter-spacing: .08px; }
.file { margin-left: 17px; }
.search { width: 223px; height: 26px; margin-left: 9px; padding-left: 3px; background: #464f62; color: #b9bdc5; font-style: italic; font-size: 14px; letter-spacing: -.4px; line-height: 26px; }
.a1 { margin-left: 5px; }
.a2 { margin-left: 10px; }
.user { width: 107px; margin-left: 7px; margin-top: 1px; font-size: 14px; letter-spacing: -.1px; }
.a4 { margin-left: 13px; }
.a5 { margin-left: 10px; }
.a6 { margin-left: 7px; }
.vsep { width: 1px; height: 22px; margin-left: 13px; background: #4a566c; }
.help { width: 20px; height: 20px; margin-left: 10px; border-radius: 50%; background: #dcdcdc; color: #3b4049; font-weight: bold; font-size: 14px; line-height: 20px; text-align: center; }
.a7 { margin-left: 11px; }
.win { margin-left: 103px; }

/* drawing area */
.canvas { position: relative; height: 910px; flex: none; background: #212830; overflow: hidden; }
.drawing { shape-rendering: crispEdges; }
.minor { stroke: #272e3a; fill: none; }
.major { stroke: #30374a; fill: none; }
.axis-y { stroke: #216a23; }
.axis-x { stroke: #702c2f; }
.w, .g, .y, .c { fill: none; stroke-width: 3; }
.w { stroke: #fff; }
.g { stroke: #7c7c7c; }
.y { stroke: #ff0; }
.c { stroke: #0ff; stroke-dasharray: 18 4 5 4; }
.g1, .w1 { stroke-width: 1; }
.d { stroke-dasharray: 6 4; }
.thick { stroke-width: 5; }
.yt { stroke-width: 7; }
.pick { fill: #212830; }
.view-label { position: absolute; left: 3px; top: 6px; font-size: 14.500px; line-height: 20px; letter-spacing: -.02px; }
.mdi { position: absolute; left: 1845px; top: 11px; }
.viewcube { position: absolute; left: 1732px; top: 41px; overflow: visible; }
.top { font: bold 17px "Open Sans", sans-serif; fill: #4b515c; text-anchor: middle; }
.dir { font: bold 27px "Liberation Sans", sans-serif; fill: #b5b6b7; text-anchor: middle; }
.ucs { position: absolute; left: 1776px; top: 240px; width: 81px; height: 21px; padding: 0 4px; border: 1px solid #767b88; border-radius: 5px; background: #9ea2b0; color: #50545e; font: 11.500px/18px "DejaVu Sans", sans-serif; display: flex; justify-content: space-between; align-items: center; }
.navbar { position: absolute; left: 1875px; top: 290px; }
.edge { position: absolute; left: 1919px; top: 144px; width: 1px; height: 766px; background: #8b8f96; }
.command { position: absolute; left: 394px; top: 876px; width: 1132px; height: 33px; display: flex; background: #272c38; border-radius: 3px; }
.cmd-input { flex: 1; height: 32px; margin-top: 1px; padding: 0 5px; display: flex; align-items: center; background: #bcbdbf; border-radius: 2px; color: #5e6063; font: italic 14.800px "DejaVu Sans Mono", monospace; }
.cmd-input span { margin-left: 6.500px; margin-top: -1px; }
.up { margin-left: auto; }

/* layout tabs */
.tabs { height: 42px; flex: none; padding: 0 0 7px 20px; border-top: 5px solid #3b4453; display: flex; align-items: center; font-size: 14px; }
.burger { margin-right: 11px; margin-top: -1px; }
.tab { line-height: 31px; letter-spacing: -.18px; }
.active { width: 86px; height: 30px; background: #3b4453; clip-path: polygon(12px 0, 100% 0, 74px 100%, 0 100%); text-align: center; font-weight: bold; }
.t1 { width: 63px; margin-left: 9px; }
.t2 { width: 63px; margin-left: 11px; }
.slash { width: 8px; height: 20px; background: linear-gradient(to bottom right, transparent 46%, #5a6374 46%, #5a6374 54%, transparent 54%); }
.plus { margin: 0 12px 0 14px; }

/* status bar */
.status { height: 33px; flex: none; display: flex; padding-left: 2px; font-size: 15px; }
.cell { height: 30px; background: #3b4453; margin-left: 3px; flex: none; }
.fill { width: 995px; margin-left: 0; }
.on { fill: #5f8fc1; }
.s-model { width: 59px; margin-left: 5px; line-height: 30px; text-align: center; letter-spacing: -.3px; }
.s-osnap, .s-lw, .s-3d, .s-add { margin-left: 1px; }
.s-scale { width: 132px; display: flex; align-items: center; }
.s-scale span { width: 17px; margin-left: 2px; margin-right: 4px; font-size: 14px; letter-spacing: -.8px; }
.s-units { width: 121px; display: flex; align-items: center; padding-left: 10px; }
.s-units span { width: 56px; margin: 0 14px 0 15px; font-size: 14.500px; }
.s-menu { margin-left: 2px; }

/* taskbar */
.taskbar { height: 60px; flex: none; border-top: 1px solid #4a4a4a; background: #1c1c1c; display: flex; align-items: flex-start; font-size: 14px; }
.weather { width: 612px; padding: 5px 0 0 25px; display: flex; }
.wtext { display: flex; flex-direction: column; line-height: 20px; padding-top: 3px; font-size: 14.500px; letter-spacing: -.25px; }
.wtext b { font-weight: 400; color: #fff; }
.wtext span { color: #bdbdbd; }
.badge-n { font: 13px "Open Sans", sans-serif; fill: #222; text-anchor: middle; }
.start { margin-top: 15px; }
.tsearch { width: 275px; height: 40px; margin: 9px 0 0 17px; padding: 0 10px 0 15px; border-radius: 20px; background: #3a3a3a; border: 1px solid #4c4c4c; display: flex; align-items: center; font-size: 16px; color: #d4d4d4; }
.tsearch span { margin-left: 10px; letter-spacing: -.1px; margin-top: 1px; }
.fruit { margin-left: auto; }
.apps { display: flex; margin-left: 5px; margin-top: 5px; }
.app { position: relative; width: 50px; height: 50px; margin-right: 5px; border-radius: 5px; display: flex; align-items: center; justify-content: center; }
.run svg[width="40"] { margin-left: 10px; }
.run::after, .cad::after { content: ""; position: absolute; bottom: 1px; left: 21px; width: 8px; height: 4px; border-radius: 2px; background: #9d9d9d; }
.cad { background: #292929; border: 1px solid #333; }
.cad::after { left: 14px; width: 20px; background: #4cc2ff; bottom: 0; }
.cad-a { font-size: 16px; }
.cad-c { font: bold 7.500px "Open Sans", sans-serif; fill: #fff; text-anchor: middle; }
.cad svg { margin-top: -1px; }
.tray { display: flex; align-items: center; height: 59px; flex: 1; color: #fff; line-height: 20px; }
.r1 { margin-left: 222px; }
.lang { width: 36px; margin-left: 23px; text-align: center; font-size: 14.500px; }
.r2 { margin-left: 19px; }
.r3 { margin-left: 10px; }
.r4 { margin-left: 10px; }
.clock { width: 86px; margin-left: 11px; text-align: right; font-size: 14.800px; letter-spacing: -.1px; }
.r5 { margin-left: 10px; }
.r6 { margin-left: 22px; }
.pre { font: bold 8px "Open Sans", sans-serif; fill: #111; text-anchor: middle; }
```
FILE: grid.js
```js
// Background grid: a major line every fifth minor one.
const stepX = 85.69 / 5;
const stepY = 85.6 / 5;
const lines = { minor: "", major: "" };
for (let i = -3; i < 110; i++) {
  const kind = i % 5 === 0 ? "major" : "minor";
  const x = Math.floor(63.88 + i * stepX) + 0.5;
  lines[kind] += `M${x} 35V945`;
}
for (let i = 0; i < 56; i++) {
  const kind = i % 5 === 0 ? "major" : "minor";
  const y = Math.floor(22.7 + i * stepY) + 0.5;
  if (y > 35) lines[kind] += `M0 ${y}H1920`;
}
document.getElementById("grid-minor").setAttribute("d", lines.minor);
document.getElementById("grid-major").setAttribute("d", lines.major);
```
